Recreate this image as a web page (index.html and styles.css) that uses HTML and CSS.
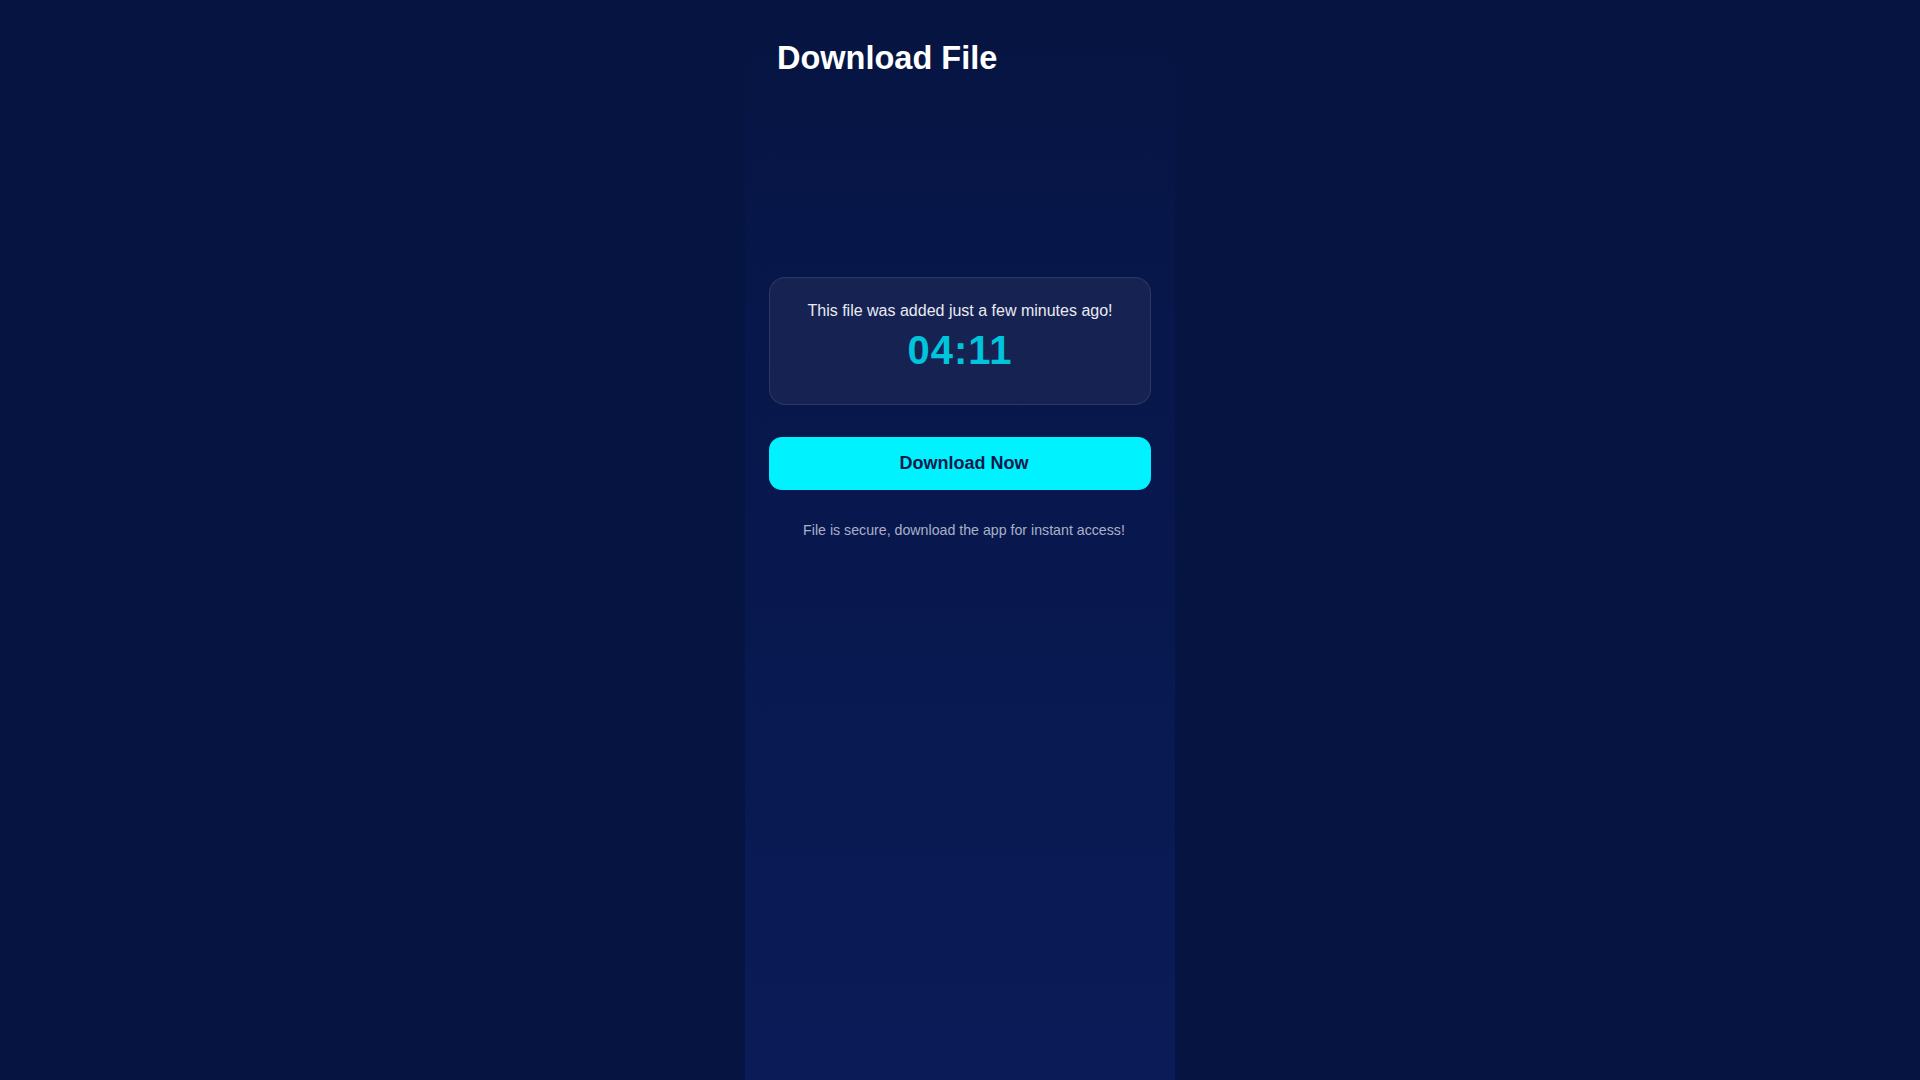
FILE: index.html
```html
<!DOCTYPE html>
<html lang="en">
<head>
<meta charset="utf-8">
<title>Download File</title>
<link rel="stylesheet" href="styles.css">
</head>
<body>
  <main class="page">
    <h1 class="title">Download File</h1>
    <div class="hero" aria-hidden="true"></div>
    <section class="card">
      <p class="card-text">This file was added just a few minutes ago!</p>
      <div class="timer">04:11</div>
    </section>
    <button class="download-btn" type="button">Download Now</button>
    <p class="note">File is secure, download the app for instant access!</p>
  </main>
</body>
</html>
```

FILE: styles.css
```css
* {
  box-sizing: border-box;
}

html, body {
  margin: 0;
  padding: 0;
  height: 100%;
}

body {
  background: #061441;
  font-family: "Liberation Sans", Arial, sans-serif;
  color: #ffffff;
}

.page {
  width: 430px;
  min-height: 100vh;
  margin: 0 auto;
  padding: 40px 24px 40px;
  display: flex;
  flex-direction: column;
  background: linear-gradient(180deg, #061441 0%, #07174b 30%, #0a1b57 100%);
}

.title {
  margin: 0 0 0 8px;
  font-size: 32.5px;
  font-weight: 700;
  line-height: 37px;
  color: #ffffff;
}

.hero {
  margin-top: 43px;
  height: 125px;
  border-radius: 16px;
  background: rgba(255, 255, 255, 0.004);
  border: 1px solid rgba(255, 255, 255, 0.008);
}

.card {
  margin-top: 32px;
  padding: 24px 23px 23px;
  border: 1px solid rgba(255, 255, 255, 0.1);
  border-radius: 16px;
  background: #162251;
  text-align: center;
}

.card-text {
  margin: 0;
  font-size: 16px;
  line-height: normal;
  color: #e9ebf3;
}

.timer {
  margin: 8px 0;
  font-size: 40px;
  font-weight: 700;
  letter-spacing: 1px;
  line-height: normal;
  color: #00c3dc;
}

.download-btn {
  margin-top: 32px;
  width: 100%;
  padding: 16px 16px 16px 24px;
  border: none;
  border-radius: 13px;
  background: #00f2fe;
  color: #0b1a4c;
  font-family: "Liberation Sans", Arial, sans-serif;
  font-size: 18px;
  font-weight: 700;
  line-height: normal;
  cursor: pointer;
}

.note {
  margin: 32px 0 0;
  padding-left: 8px;
  font-size: 14.2px;
  line-height: normal;
  text-align: center;
  color: #a9b0c8;
}
```
